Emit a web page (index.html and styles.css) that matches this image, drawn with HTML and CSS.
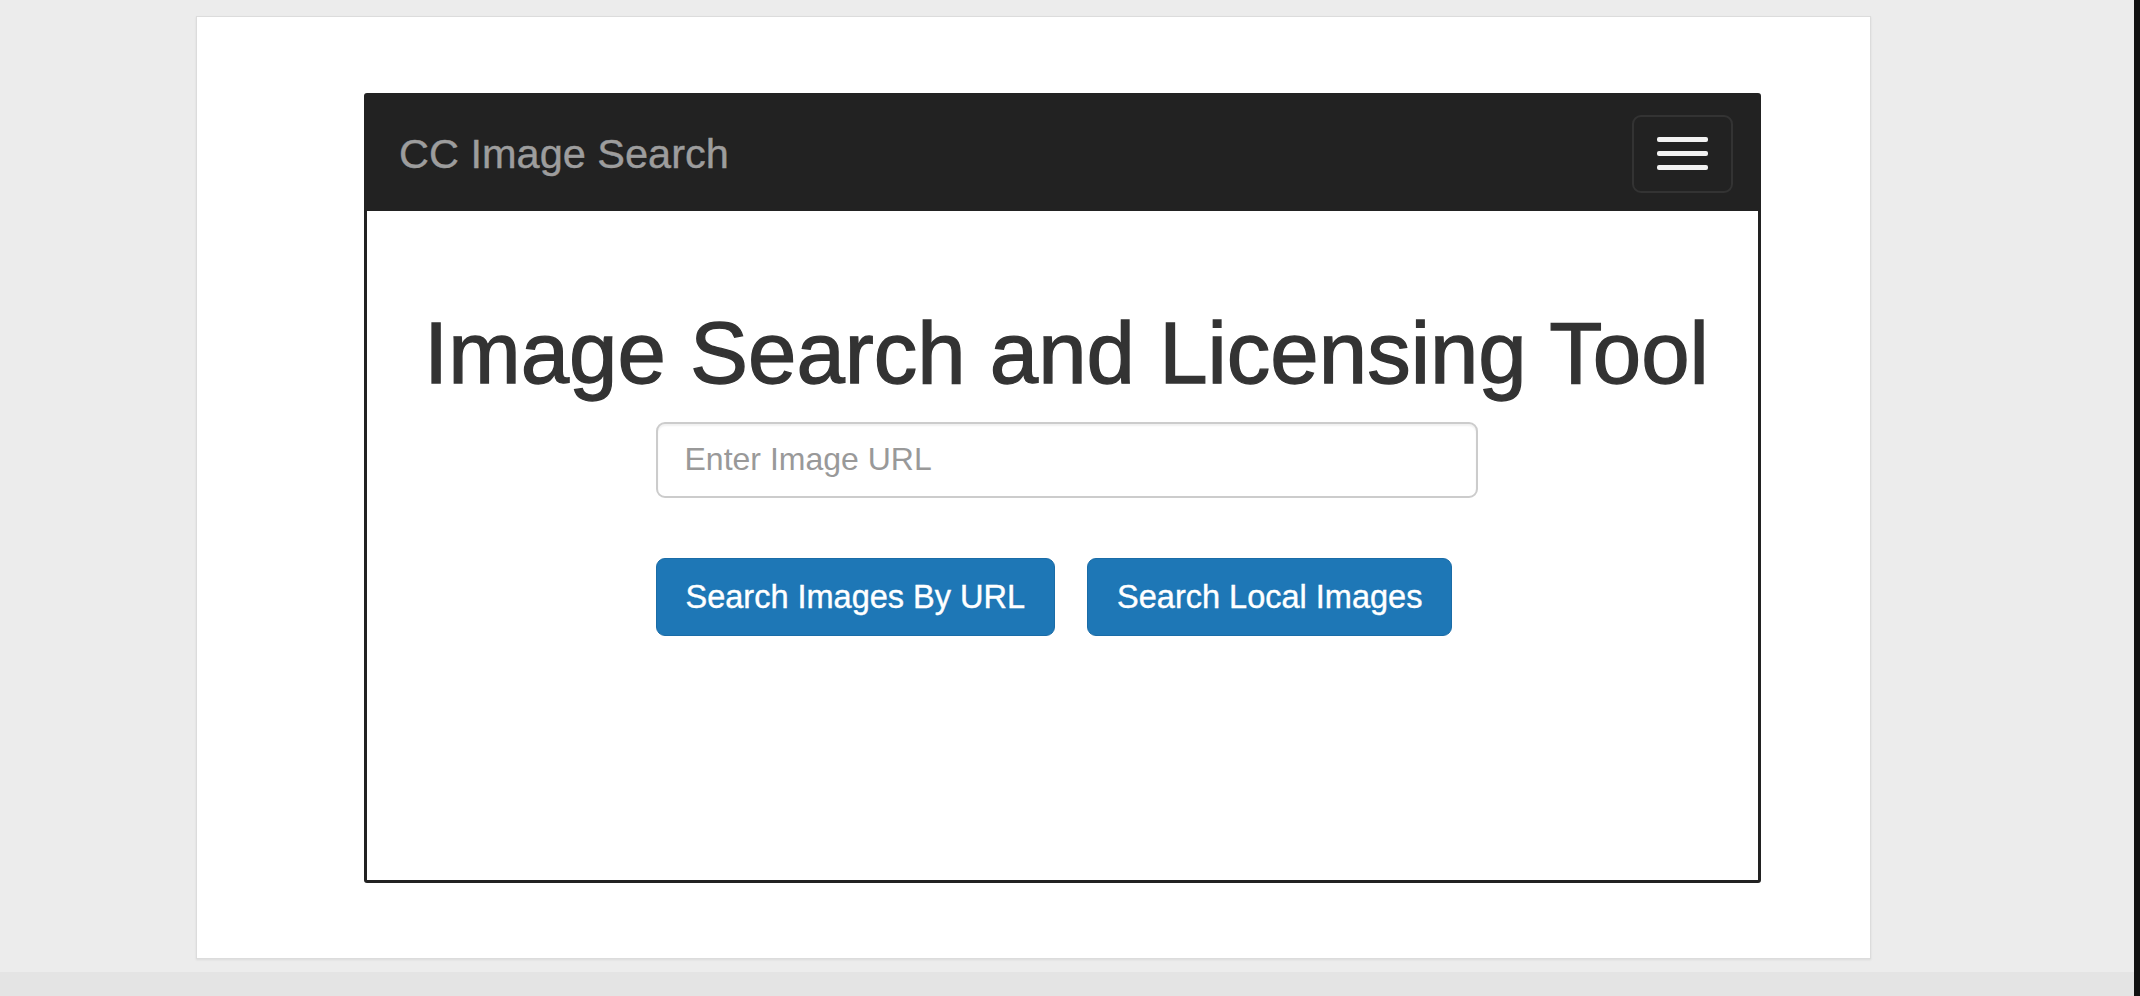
FILE: index.html
```html
<!DOCTYPE html>
<html lang="en">
<head>
<meta charset="utf-8">
<title>CC Image Search</title>
<link rel="stylesheet" href="styles.css">
</head>
<body>
<div class="screen">
  <div class="main">
    <div class="stage">
      <div class="card">
        <div class="frame">
          <nav class="navbar">
            <a class="brand" href="#">CC Image Search</a>
            <button class="toggle" type="button" aria-label="Toggle navigation">
              <span class="bar"></span>
              <span class="bar"></span>
              <span class="bar"></span>
            </button>
          </nav>
          <main class="content">
            <h1 class="title">Image Search and Licensing Tool</h1>
            <form class="search-form">
              <input class="url-input" type="text" placeholder="Enter Image URL">
              <div class="actions">
                <button class="btn" type="button">Search Images By URL</button>
                <button class="btn" type="button">Search Local Images</button>
              </div>
            </form>
          </main>
        </div>
      </div>
    </div>
    <div class="strip"></div>
  </div>
  <div class="edge"></div>
</div>
</body>
</html>
```

FILE: styles.css
```css
html, body {
  margin: 0;
  padding: 0;
}
body {
  width: 2140px;
  height: 996px;
  overflow: hidden;
  background: #ececec;
  font-family: "Liberation Sans", Arial, Helvetica, sans-serif;
}
.screen {
  display: flex;
  width: 2140px;
  height: 996px;
}
.main {
  flex: 1;
  display: flex;
  flex-direction: column;
}
.edge {
  width: 6px;
  background: #111;
}
.stage {
  height: 972px;
  box-sizing: border-box;
  padding: 16px 0 0 196px;
  background: #ececec;
}
.strip {
  flex: 1;
  background: #e4e4e4;
}
.card {
  width: 1675px;
  height: 943px;
  box-sizing: border-box;
  background: #fff;
  border: 1px solid #dcdcdc;
  box-shadow: 0 1px 2px rgba(0, 0, 0, 0.08);
  padding: 76px 0 0 167px;
}
.frame {
  width: 1397px;
  height: 790px;
  box-sizing: border-box;
  border: 3px solid #222;
  border-radius: 3px;
  background: #fff;
  display: flex;
  flex-direction: column;
}
.navbar {
  height: 115px;
  flex: none;
  background: #222;
  display: flex;
  align-items: center;
  justify-content: space-between;
  padding: 0 25px 0 32px;
}
.brand {
  color: #9d9d9d;
  font-size: 41.5px;
  text-decoration: none;
  line-height: 1;
  -webkit-text-stroke: 0.4px #9d9d9d;
}
.toggle {
  width: 101px;
  height: 78px;
  box-sizing: border-box;
  background: transparent;
  border: 2px solid #333;
  border-radius: 9px;
  display: flex;
  flex-direction: column;
  align-items: center;
  justify-content: center;
  gap: 9px;
  padding: 0;
}
.bar {
  display: block;
  width: 51px;
  height: 5px;
  border-radius: 2px;
  background: #f2f2f2;
}
.content {
  padding: 95px 0 0 8px;
  display: flex;
  flex-direction: column;
  align-items: center;
}
.title {
  margin: 0;
  font-size: 87px;
  line-height: 1.09;
  font-weight: 400;
  color: #333;
  text-align: center;
  -webkit-text-stroke: 1.3px #333;
}
.search-form {
  width: 822px;
  margin-top: 21px;
  display: flex;
  flex-direction: column;
}
.url-input {
  width: 822px;
  height: 76px;
  box-sizing: border-box;
  border: 2px solid #ccc;
  border-radius: 9px;
  padding: 0 25px 0 27px;
  font-family: "Liberation Sans", Arial, Helvetica, sans-serif;
  font-size: 32px;
  color: #555;
  box-shadow: inset 0 2px 2px rgba(0, 0, 0, 0.06);
  outline: none;
}
.url-input::placeholder {
  color: #999;
}
.actions {
  margin-top: 60px;
  display: flex;
  gap: 32px;
}
.btn {
  font-family: "Liberation Sans", Arial, Helvetica, sans-serif;
  font-size: 32.5px;
  line-height: 48px;
  padding: 14px 29px;
  color: #fff;
  background: #1e77b6;
  border: 1px solid #1a6ca7;
  border-radius: 9px;
  cursor: pointer;
  -webkit-text-stroke: 0.4px #fff;
}
```
